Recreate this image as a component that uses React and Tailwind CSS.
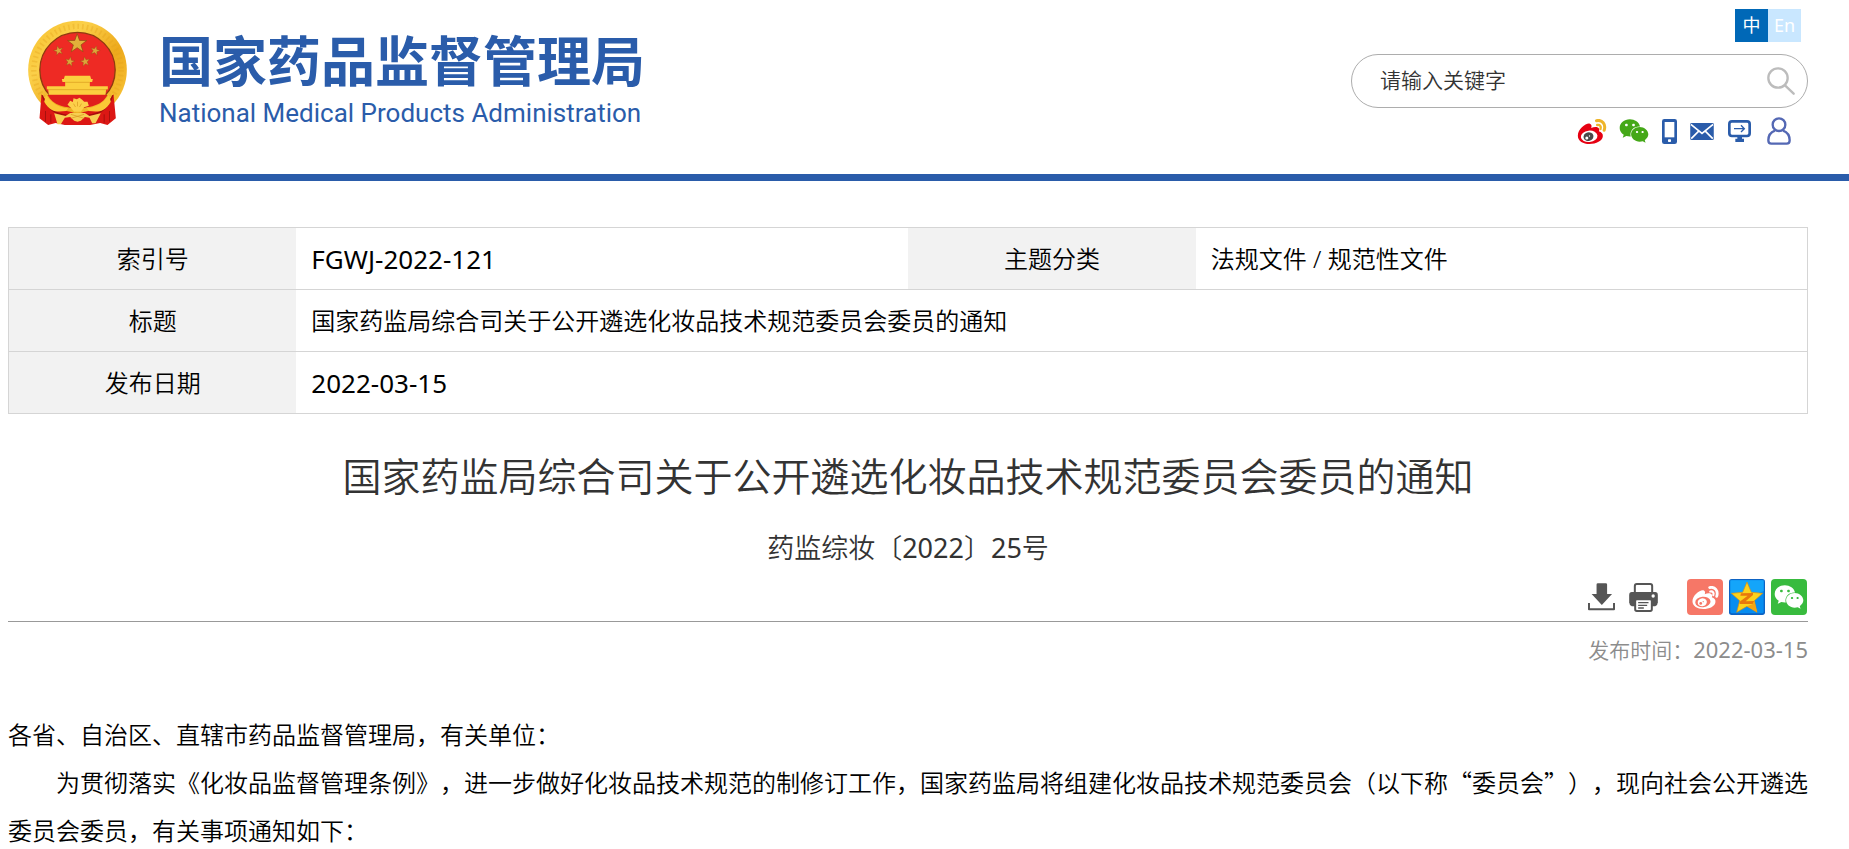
import React, { useState } from 'react';
import { FaWeixin } from 'react-icons/fa';

const TITLE = '国家药监局综合司关于公开遴选化妆品技术规范委员会委员的通知';

const SANS = "font-['Noto_Sans','Noto_Sans_CJK_SC',sans-serif]";
const CJK = "font-['Noto_Sans_CJK_SC',sans-serif]";

function starPoints(cx, cy, r, rotate = 0) {
  const points = [];
  for (let i = 0; i < 10; i++) {
    const radius = i % 2 ? r * 0.4 : r;
    const angle = ((i * 36 - 90 + rotate) * Math.PI) / 180;
    points.push(`${(cx + radius * Math.cos(angle)).toFixed(1)},${(cy + radius * Math.sin(angle)).toFixed(1)}`);
  }
  return points.join(' ');
}

function Emblem() {
  return (
    <svg viewBox="21 17 302 318" className="h-[106px] w-[101px] shrink-0" role="img" aria-label="国徽">
      <defs>
        <linearGradient id="gold" x1="0" y1="0" x2="1" y2="1">
          <stop offset="0" stopColor="#f7c02c" />
          <stop offset="0.3" stopColor="#fbd04a" />
          <stop offset="0.6" stopColor="#eda91c" />
          <stop offset="1" stopColor="#fbcb3e" />
        </linearGradient>
      </defs>
      <circle cx="172" cy="167" r="148" fill="url(#gold)" />
      <circle cx="172" cy="167" r="131" fill="none" stroke="#e3a01b" strokeWidth="16" strokeDasharray="5 9" opacity="0.35" />
      <circle cx="172" cy="167" r="113" fill="#ee2a24" stroke="#8f3a10" strokeWidth="4" />
      <polygon points={starPoints(171, 88, 30)} fill="#e2b13a" stroke="#8a4a10" strokeWidth="2" />
      <polygon points={starPoints(115, 109, 15, -15)} fill="#dca53a" stroke="#8a4a10" />
      <polygon points={starPoints(225, 109, 15, 15)} fill="#dca53a" stroke="#8a4a10" />
      <polygon points={starPoints(149, 142, 15, 10)} fill="#dca53a" stroke="#8a4a10" />
      <polygon points={starPoints(195, 142, 15, -10)} fill="#dca53a" stroke="#8a4a10" />
      <path d="M134 184H210L213 194H218L216 203H209V216H263V225H258L256 241H86L84 225H80V216H135V203H127L125 194H131Z" fill="#fbd03f" />
      <path d="M82 226H262M135 204H209" stroke="#d99a1e" strokeWidth="2" />
      <path d="M82 242H262C244 276 206 280 172 280C136 280 100 276 82 242Z" fill="#e01f1c" />
      <path d="M64 240C100 296 140 284 172 300C204 284 244 296 280 240L287 312L262 332L240 326L210 332H134L106 326L84 332L58 312Z" fill="#dc1714" />
      <path d="M66 243C82 290 112 300 142 303M278 243C262 290 232 300 202 303" fill="none" stroke="#a10f0d" strokeWidth="4" />
      <path d="M72 262C92 298 118 292 138 290L144 282C118 280 92 266 78 242M272 262C252 298 226 292 206 290L200 282C226 280 252 266 266 242" fill="#fbc936" />
      <path d="M142 271L150 259L158 263L160 252L170 255L178 250L186 256L192 262L202 262L206 274L192 279L182 292H162L152 280Z" fill="#fcd04a" />
      <path d="M102 297L136 305L150 296H194L208 305L242 297L226 327H216L208 310L194 308L182 319L172 322L162 319L150 308L134 310L122 330H112Z" fill="#f6cf52" />
      <path d="M172 262V276M160 268L166 278M184 268L178 278M152 300L192 312M192 300L152 312" stroke="#d8961d" strokeWidth="2" />
      <path d="M76 290V322M92 300V325M268 290V322M252 300V325" stroke="#a8100e" strokeWidth="3" />
    </svg>
  );
}

function WeiboIcon({ className, body, eye, waves }) {
  return (
    <svg viewBox="0 0 87 75" className={className}>
      <path
        d="M1 50C1 30 26 11 37 14C43 16 43 22 41 27C50 23 62 22 65 30C66 34 64 37 64 37C72 39 77 45 76 52C75 66 56 75 36 75C17 75 1 66 1 50Z"
        fill={body}
      />
      <ellipse cx="35" cy="52" rx="25" ry="17" fill={eye.white} transform="rotate(-6 35 52)" />
      <ellipse cx="33" cy="53" rx="15" ry="13" fill={eye.iris} transform="rotate(-15 33 53)" />
      <circle cx="28" cy="57" r="4.5" fill={eye.white} />
      <circle cx="36" cy="51" r="2" fill={eye.white} />
      <path d="M57 5C74 1 86 16 80 34" fill="none" stroke={waves} strokeWidth="9" strokeLinecap="round" />
      <path d="M59 18C67 16 72 22 69 30" fill="none" stroke={waves} strokeWidth="7" strokeLinecap="round" />
    </svg>
  );
}

function PhoneIcon() {
  return (
    <svg viewBox="0 0 45 75" className="h-[25px] w-[15px]">
      <rect width="45" height="75" rx="7" fill="#2a5caa" />
      <rect x="8" y="9" width="29" height="46" fill="#fff" />
      <rect x="18" y="61" width="9" height="8" rx="2" fill="#fff" />
    </svg>
  );
}

function MailIcon() {
  return (
    <svg viewBox="0 0 72 52" className="h-[17px] w-6">
      <rect width="72" height="52" rx="4" fill="#2a5caa" />
      <path d="M2 4L36 32L70 4M3 48L26 25M69 48L46 25" fill="none" stroke="#fff" strokeWidth="5" />
    </svg>
  );
}

function MonitorIcon() {
  return (
    <svg viewBox="0 0 69 66" className="h-[22px] w-[23px]">
      <rect x="4" y="4" width="61" height="44" rx="8" fill="#fff" stroke="#2a5caa" strokeWidth="8" />
      <path d="M28 50H42V56H48V66H22V56H28Z" fill="#2a5caa" />
      <path d="M18 26H48M39 16L49 26L39 36" fill="none" stroke="#2a5caa" strokeWidth="4" />
    </svg>
  );
}

function UserIcon() {
  return (
    <svg viewBox="0 0 72 84" className="h-7 w-6">
      <g fill="none" stroke="#5468b4" strokeWidth="7">
        <circle cx="36" cy="23" r="19" />
        <path d="M24 41C10 46 4 56 4 70Q4 80 13 80H59Q68 80 68 70C68 56 62 46 48 41" />
      </g>
    </svg>
  );
}

function DownloadIcon() {
  return (
    <svg viewBox="0 0 82 84" className="h-7 w-[27px]">
      <path d="M26 4Q26 0 30 0H54Q58 0 58 4V33H73L42 66L11 33H26Z" fill="#555" />
      <path d="M3 60V79H79V60" fill="none" stroke="#555" strokeWidth="6" strokeLinejoin="round" />
    </svg>
  );
}

function PrintIcon() {
  return (
    <svg viewBox="0 0 86 87" className="h-[29px] w-[29px]">
      <path d="M17 30V9Q17 3 23 3H63Q69 3 69 9V30" fill="#fff" stroke="#555" strokeWidth="6" />
      <path d="M8 27H78Q86 27 86 36V58Q86 66 78 70H8Q0 66 0 58V36Q0 27 8 27Z" fill="#555" />
      <circle cx="72" cy="39" r="5" fill="#fff" />
      <rect x="18" y="49" width="50" height="35" rx="5" fill="#fff" stroke="#555" strokeWidth="6" />
      <path d="M27 59H58M27 67H54M27 75H44" stroke="#555" strokeWidth="4" />
    </svg>
  );
}

function QzoneIcon() {
  return (
    <svg viewBox="0 0 108 108" className="size-9">
      <rect width="108" height="108" rx="8" fill="#0d63c4" />
      <rect x="4" y="4" width="100" height="99" rx="5" fill="#078df0" />
      <path d="M4 4H104V36Q54 60 4 44Z" fill="#14a5fa" />
      <path d="M54 9L67 40L101 43L76 65L84 100L54 82L23 100L32 65L7 43L41 40Z" fill="#fcd21c" stroke="#d98c10" strokeWidth="2" />
      <path d="M36 43L72 42V48L50 67L76 66L72 75H32V68L56 50H34Z" fill="#e8780c" />
      <path d="M76 66L84 99L54 82L70 76Z" fill="#f3a512" />
    </svg>
  );
}

function SearchForm() {
  const [keyword, setKeyword] = useState('');

  return (
    <form
      onSubmit={(e) => e.preventDefault()}
      className="mt-3 flex h-[54px] w-[457px] items-center rounded-full border border-[#adadad] pr-3 pl-7"
    >
      <input
        type="text"
        aria-label="请输入关键字"
        placeholder="请输入关键字"
        value={keyword}
        onChange={(e) => setKeyword(e.target.value)}
        className="min-w-0 flex-1 text-[21px] text-[#333] outline-none placeholder:text-[#333]"
      />
      <button type="submit" aria-label="搜索">
        <svg viewBox="0 0 84 84" className="size-7">
          <g fill="none" stroke="#bcbcbc" strokeWidth="7" strokeLinecap="round">
            <circle cx="33" cy="33" r="29" />
            <path d="M54 55L80 80" />
          </g>
        </svg>
      </button>
    </form>
  );
}

function Header() {
  return (
    <header className="flex h-[181px] justify-between border-b-[7px] border-[#2a5caa] pr-[41px] pl-[27px]">
      <a href="#" className="flex items-start gap-[31px] pt-5 text-[#2a5caa]">
        <Emblem />
        <span className="flex flex-col gap-[10px] pt-[11px]">
          <span className={`${CJK} text-[54px] leading-[56px] font-bold`}>国家药品监督管理局</span>
          <span className="font-[Roboto,sans-serif] text-[26px] leading-8 font-normal">
            National Medical Products Administration
          </span>
        </span>
      </a>

      <div className="flex flex-col items-end pt-[9px]">
        <nav aria-label="语言" className="mr-[7px] flex text-center text-lg leading-[33px] font-normal text-white">
          <a href="#" className="w-[33px] bg-[#0068b7]">中</a>
          <a href="#" className="w-[33px] bg-[#c9e7ff]">En</a>
        </nav>
        <SearchForm />
        <div className="mt-[9px] mr-[17px] flex h-7 items-center">
          <a href="#" aria-label="微博">
            <WeiboIcon
              className="h-[25px] w-[30px]"
              body="#e60012"
              eye={{ white: '#fff', iris: '#4a4a4a' }}
              waves="#eeb52a"
            />
          </a>
          <a href="#" aria-label="微信" className="ml-3">
            <FaWeixin size={30} color="#45a818" />
          </a>
          <a href="#" aria-label="移动版" className="ml-[13px]"><PhoneIcon /></a>
          <a href="#" aria-label="邮箱" className="ml-[13px]"><MailIcon /></a>
          <a href="#" aria-label="网站登录" className="ml-[14px]"><MonitorIcon /></a>
          <a href="#" aria-label="个人中心" className="ml-4"><UserIcon /></a>
        </div>
      </div>
    </header>
  );
}

function InfoTable() {
  const label = 'w-[16%] bg-[#f2f2f2] text-center font-[350]';
  const value = 'pl-[15px]';

  return (
    <table className="w-full table-fixed border-collapse border border-[#d5d5d5] text-2xl text-black">
      <tbody>
        <tr className="h-[62px] border-b border-[#d5d5d5]">
          <th scope="row" className={label}>索引号</th>
          <td className={`${value} text-[26px] leading-8 font-normal`}>FGWJ-2022-121</td>
          <th scope="row" className={label}>主题分类</th>
          <td className={value}>法规文件 / 规范性文件</td>
        </tr>
        <tr className="h-[62px] border-b border-[#d5d5d5]">
          <th scope="row" className={label}>标题</th>
          <td colSpan={3} className={value}>{TITLE}</td>
        </tr>
        <tr className="h-[62px]">
          <th scope="row" className={label}>发布日期</th>
          <td colSpan={3} className={`${value} text-[26px] leading-8 font-normal`}>2022-03-15</td>
        </tr>
      </tbody>
    </table>
  );
}

function ArticleTools() {
  return (
    <div className="flex h-[43px] items-start justify-end border-b border-[#999] pr-px">
      <div className="flex h-9 items-center gap-[14px]">
        <button type="button" aria-label="下载"><DownloadIcon /></button>
        <button type="button" aria-label="打印"><PrintIcon /></button>
      </div>
      <div className="ml-[29px] flex gap-[6px]">
        <a href="#" aria-label="分享到微博" className="flex size-9 items-center justify-center rounded-sm bg-[#f67767]">
          <WeiboIcon
            className="h-[23px] w-[27px]"
            body="#fff"
            eye={{ white: '#f67767', iris: '#fff' }}
            waves="#fff"
          />
        </a>
        <a href="#" aria-label="分享到QQ空间"><QzoneIcon /></a>
        <a href="#" aria-label="分享到微信" className="flex size-9 items-center justify-center rounded-sm bg-[#38bb3e]">
          <FaWeixin size={30} color="#fff" />
        </a>
      </div>
    </div>
  );
}

export default function App() {
  return (
    <div className={`h-screen overflow-hidden bg-white font-[350] ${SANS}`}>
      <Header />
      <main className="mt-[46px] pr-[41px] pl-2">
        <InfoTable />
        <h1 className="mt-[34px] text-center text-[39px] leading-[56px] font-[350] text-[#333]">{TITLE}</h1>
        <p className="mt-[26px] text-center text-[27px] leading-[36px] text-[#333]">
          药监综妆〔<span className="font-normal">2022</span>〕<span className="font-normal">25</span>号
        </p>
        <div className="mt-[13px]">
          <ArticleTools />
        </div>
        <p className="mt-[11px] text-right text-[21px] leading-8 text-[#8c8c8c]">
          发布时间：<time className="text-[22px] font-normal">2022-03-15</time>
        </p>
        <article className={`mt-11 text-2xl leading-[48px] text-black [text-spacing-trim:space-all] ${CJK}`}>
          <p>各省、自治区、直辖市药品监督管理局，有关单位：</p>
          <p className="indent-[48px]">
            为贯彻落实《化妆品监督管理条例》，进一步做好化妆品技术规范的制修订工作，国家药监局将组建化妆品技术规范委员会（以下称“委员会”），现向社会公开遴选委员会委员，有关事项通知如下：
          </p>
        </article>
      </main>
    </div>
  );
}
